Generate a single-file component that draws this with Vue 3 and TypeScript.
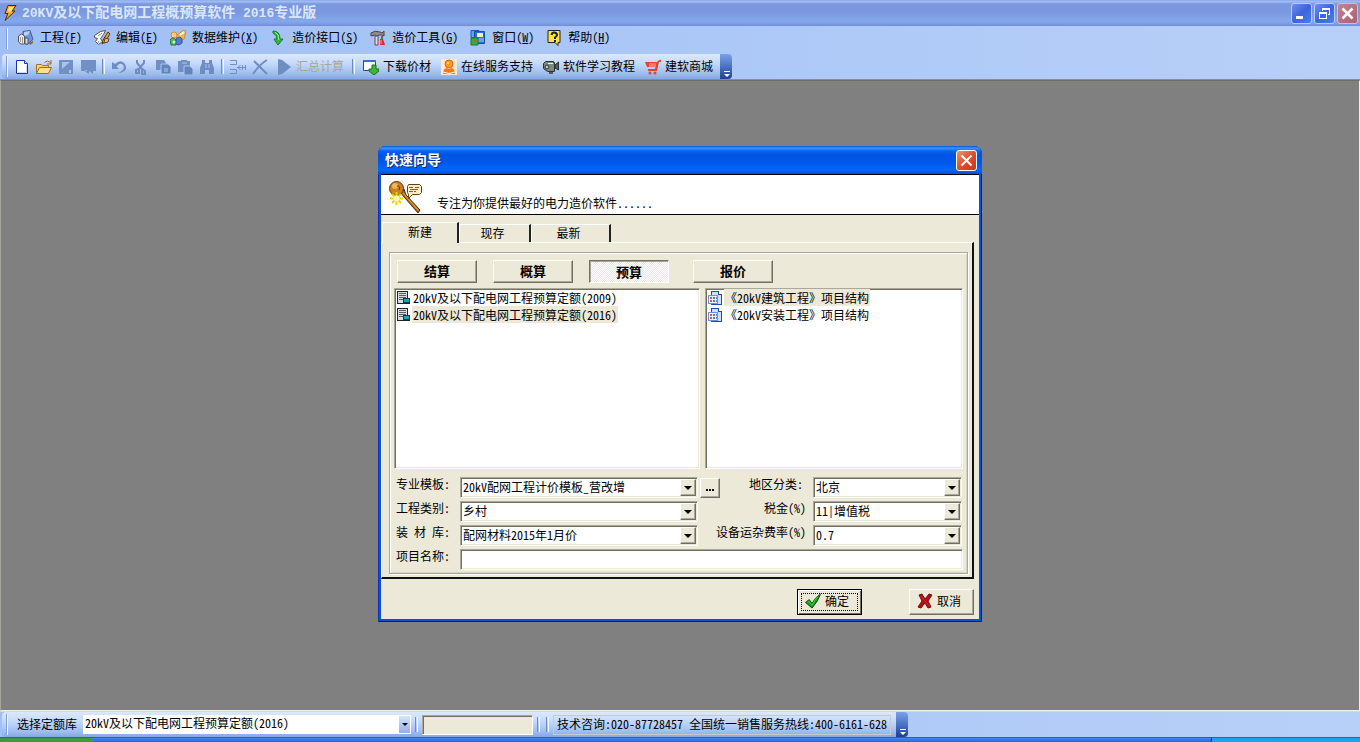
<script setup lang="ts">
import { ref } from 'vue'

interface MenuItem { icon: string; label: string; key: string }
interface Tool { icon: string; title: string; label?: string; off?: boolean; sep?: boolean }

const icons: Record<string, string> = {
  bolt: '<path d="M6 0.500 14 .5 10 6h3L3 15.500 6 8.500H3z" fill="#ffb01c" stroke="#4a2a08"/><path d="M7 2h5L9 6.500H6z" fill="#ffe58a"/>',
  project: '<path d="M5 1.500l7-1 3 9-6 5-4-3z" fill="#6f95d6" stroke="#44598c"/><path d="M6 2l6-1-2 4-4 1z" fill="#b9d2f8"/><path d="M.500 6l3-2 3 2v8H3l-2.500-2z" fill="#ecece8" stroke="#555"/><path d="M2.500 7v5M4.500 7v6" stroke="#999"/><path d="M7 8h3v6H7z" fill="#d8dde8" stroke="#556"/><path d="M11 13l4-2v2l-3 2z" fill="#876b33"/>',
  edit: '<path d="M.500 5.500l6-4 5-1-2 4-3 4 2 3-4 3-3-3 2-3-3-1z" fill="#f8f8f4" stroke="#555"/><path d="M4 6l4-3M5 11l-1 2" stroke="#888"/><path d="M14 2l-5 8-1 4 3-2 5-8z" fill="#e8a24a" stroke="#473010"/><path d="M11 8l4 1-1 3-4 1z" fill="#e8b878" stroke="#59452a"/>',
  data: '<path d="M7 5l7-5 2 1-2 8-5 3-3-3z" fill="#f6b84d" stroke="#cf8b29"/><path d="M10 5l4-3" stroke="#fff" stroke-width="2"/><circle cx="4" cy="5" r="3" fill="#f9cc78" stroke="#d28d35"/><path d="M0 10q3-4 6 0v5H1z" fill="#51b858" stroke="#287b42"/><path d="M6 9q4-4 6 0v4l-3 2-3-1z" fill="#4f79d8" stroke="#3157a4"/><circle cx="4" cy="12" r="1.500" fill="#d9fac9"/>',
  port: '<path d="M3 1q7 0 7 8h3l-5 6-4-6h3Q7 5 3 3z" fill="#34b53c" stroke="#197d25"/><path d="M5 2q4 2 4 8" fill="none" stroke="#a1ec91"/>',
  tools: '<path d="M1 3q4-3 9-1l2 1 2-2v5l-2-1H9L7 6 5 5 1 6z" fill="#8d8f90" stroke="#444"/><path d="M5 6h3v9H5z" fill="#ddd" stroke="#555"/><path d="M11 6h2v4h-2z" fill="#666"/><path d="M10 9h3l2 6h-5z" fill="#dc2933"/><path d="M11 10v4" stroke="#ff9a9a"/>',
  window: '<path d="M1 .500h8v7H1z" fill="#58a8ee" stroke="#1657b2"/><path d="M4.500 1.500h10v12h-10z" fill="#2871d4" stroke="#1650aa"/><path d="M7 3h6v4H7z" fill="#f8f0c1"/><path d="M8 9h6M8 11h6" stroke="#a8d0ff"/><path d="M1 8h7v7H1z" fill="#34ad45" stroke="#187b32"/><path d="M3 10h3v2H3z" fill="#dc5430"/>',
  help: '<path d="M2 .500h12v12h-2v3l-3-3H2z" fill="#ffe632" stroke="#222"/><path d="M5.500 5Q6 2.500 8 2.500q3 0 3 2.500 0 1-2 2.500v1.500M9 10v2" fill="none" stroke="#222" stroke-width="2"/>',
  new: '<path d="M2.500 1.500h8l3 3v10h-11z" fill="#fff" stroke="#1736a5"/><path d="M10.500 1.500v3h3" fill="#d6e6ff" stroke="#1736a5"/><path d="M12.500 6v7.500H4" fill="none" stroke="#c8dafa"/>',
  open: '<path d="M.500 14.500v-9h5l1 1h6v2" fill="#f5d276" stroke="#a3761b"/><path d="M.500 14.500l3-6h12l-3 6z" fill="#ffdf86" stroke="#a36b14"/><path d="M8.500 3.500q3-3 6 0M15 1v4h-4" fill="none" stroke="#a36b14"/>',
  save: '<path d="M1 1h14v14H1z" fill="#7390c5"/><path d="M4 3h8l-8 7z" fill="#a9c4ec"/><path d="M11 11h2v3h-2z" fill="#adc7ef"/>',
  book: '<path d="M1 1h15v11h-3v3l-4-3v3l-5-3H1z" fill="#7390c5"/><path d="M4 13l3-2" stroke="#adc6ef"/>',
  undo: '<path d="M1 3v7h7L5.500 7.500Q9 3 12 6q3 5-5 8Q18 13 14 5 10-.500 4 5z" fill="#6f8cc3"/>',
  cut: '<path d="M4 1v3l6 7M11 1v3L5 11" stroke="#6f8cc3" stroke-width="2" fill="none"/><path d="M6 10v4H3v-3zM9 10l3 2v3H9z" fill="none" stroke="#6f8cc3" stroke-width="2"/>',
  copy: '<path d="M1 1h8l2 3v7H1z" fill="#728fc5"/><path d="M6 5h7l3 3v7H6z" fill="#6583be" stroke="#adc6ef"/><path d="M9 10h4M9 12h4" stroke="#adc6ef"/>',
  paste: '<path d="M1 2h3V1h6v1h3v11H1z" fill="#728fc5"/><path d="M7 7h6l3 3v6H7z" fill="#6583be" stroke="#adc6ef"/><path d="M5 4h5" stroke="#a9c4ec"/>',
  find: '<path d="M3 1h3v3h4V1h3v3l2 5v6h-5v-4H6v4H1V9l2-5z" fill="#6f8cc3"/><path d="M7 5v4M10 5v4" stroke="#a9c4ec"/>',
  insert: '<path d="M0 1.500h6.500v4H0M0 10.500h6.500v4H0M7 8.500h9M10.500 6L8 8.500l2.500 2.500M12.500 6v5M15.500 6v5" fill="none" stroke="#728fc5"/>',
  delete: '<path d="M2 2l13 13M15 1Q8 5 1 15" stroke="#6f8cc3" stroke-width="2" fill="none"/>',
  play: '<path d="M2 0l4 1 9 7-9 7-4 1z" fill="#6f8cc3"/>',
  download: '<path d="M.500 1.500h12v10H.500z" fill="#fff" stroke="#234899"/><path d="M1 1h12v2H1z" fill="#426dc6"/><path d="M9 6h4v4h3v2l-5 4-5-4v-2h3z" fill="#40b53a" stroke="#16731a"/>',
  user: '<path d="M0 0h16v16H0z" fill="#ffe7d2"/><circle cx="8" cy="5" r="4" fill="#ff9820" stroke="#e66414"/><path d="M2 15q0-6 4-6 2 2 4 0 4 0 4 6z" fill="#f5781c"/><path d="M2 13q6 3 12 0" stroke="#fff" fill="none"/><circle cx="7" cy="4" r="1" fill="#ffe19b"/>',
  camera: '<path d="M.500 4.500l2-2h8v1h1v9h-7l-4-3z" fill="#7d8883" stroke="#27352f"/><path d="M12 6l3.500-3v8L12 9z" fill="#4d5f67" stroke="#26343b"/><circle cx="4" cy="8" r="2" fill="#b6c1b8" stroke="#333"/><path d="M6 13h4v2H6z" fill="#555"/><path d="M5 4.500h5" stroke="#edf2e9"/>',
  cart: '<path d="M0 3h12l2-2h2v2h-2l-2 9H3v-2h7l.500-2H2z" fill="#e34234"/><path d="M4 5h7M4 7h7" stroke="#f6b0a4"/><circle cx="5" cy="14" r="1.500" fill="#e34234"/><circle cx="10" cy="14" r="1.500" fill="#e34234"/>',
  quota: '<path d="M.500 .500h10v12H.500z" fill="#d9dddd" stroke="#222"/><path d="M2 2.500h7M2 4.500h7M2 6.500h7M2 8.500h4" stroke="#565d60"/><path d="M6.500 7.500h6v4h-6z" fill="#16a6b8" stroke="#07434f"/><path d="M2 12.500h11" stroke="#222"/>',
  structure: '<path d="M3.500 .500h7l3 3v10h-10z" fill="#cfe0ff" stroke="#1d4cae"/><path d="M.500 4.500h9v8h-9z" fill="#edf3ff" stroke="#6b92dc"/><path d="M2 6h2v2H2zM2 9h2v2H2z" fill="#e5533a"/><path d="M5 9h2v2H5z" fill="#3d9c55"/><path d="M5 6h2v2H5zM8 6h1v2H8zM8 9h1v2H8z" fill="#5a78dc"/><path d="M10.500 .500v3h3" fill="#fff" stroke="#1d4cae"/>',
  check: '<path d="M1 10l4-3 3 4Q11 5 17 1q-2 7-9 15z" fill="#139c18" stroke="#064c0b"/><path d="M3 10l2-1 3 4q3-6 6-9" fill="none" stroke="#4fd640"/><path d="M15 1h2v1h-2z" fill="#e03fc2"/>',
  cross: '<path d="M2 2l3-1 3 5 4-5 3 1-4 6 3 6-3 1-3-5-4 5-3-1 4-6z" fill="#b30f12" stroke="#7a0b0e"/><path d="M4 3l8 10" stroke="#d0302a"/>',
  wand: '<path d="M10 10l5-2 2 6 14 15-2 3z" fill="#b56c14" stroke="#4a2a05"/><path d="M14 12l15 17" stroke="#e8ab50"/><circle cx="7.500" cy="7.500" r="7" fill="#cf7f1e" stroke="#5c340a"/><circle cx="6" cy="5" r="3" fill="#f0b45e"/><path d="M8 5q4 0 2 4" fill="none" stroke="#5c340a"/><path d="M19.500 3.500h11l2 2v6l-2 2h-7l-4 4v-4l-1-2v-6z" fill="#fdeecb" stroke="#6b3d10"/><path d="M20 6.500h4M26 6.500h4M21 8.500h8M20 10.500h4M25 10.500h2" stroke="#8d5c25"/><path d="M7.500 11v13M1 17.500h13M3 13l9 9M12 13l-9 9" stroke="#e1d800" stroke-width="2"/><circle cx="7.500" cy="17.500" r="3" fill="#fffcae"/>',
}

const menus: MenuItem[] = [
  { icon: 'project', label: '工程', key: 'F' },
  { icon: 'edit', label: '编辑', key: 'E' },
  { icon: 'data', label: '数据维护', key: 'X' },
  { icon: 'port', label: '造价接口', key: 'S' },
  { icon: 'tools', label: '造价工具', key: 'G' },
  { icon: 'window', label: '窗口', key: 'W' },
  { icon: 'help', label: '帮助', key: 'H' },
]

const tools: Tool[] = [
  { icon: 'new', title: '新建' },
  { icon: 'open', title: '打开' },
  { icon: 'save', title: '保存', off: true },
  { icon: 'book', title: '关闭', off: true },
  { icon: 'undo', title: '撤销', off: true, sep: true },
  { icon: 'cut', title: '剪切', off: true },
  { icon: 'copy', title: '复制', off: true },
  { icon: 'paste', title: '粘贴', off: true },
  { icon: 'find', title: '查找', off: true },
  { icon: 'insert', title: '插入', off: true, sep: true },
  { icon: 'delete', title: '删除', off: true },
  { icon: 'play', title: '汇总计算', label: '汇总计算', off: true },
  { icon: 'download', title: '下载价材', label: '下载价材', sep: true },
  { icon: 'user', title: '在线服务支持', label: '在线服务支持' },
  { icon: 'camera', title: '软件学习教程', label: '软件学习教程' },
  { icon: 'cart', title: '建软商城', label: '建软商城' },
]

const tabs = ['新建', '现存', '最新']
const kinds = ['结算', '概算', '预算', '报价']
const quotas = ['20kV及以下配电网工程预算定额(2009)', '20kV及以下配电网工程预算定额(2016)']
const structures = ['《20kV建筑工程》项目结构', '《20kV安装工程》项目结构']

const tab = ref(0)
const kind = ref(2)
const quota = ref(1)
const structure = ref(0)
const projectName = ref('')
</script>

<template>
  <div class="app">
    <header class="caption">
      <svg class="ico" viewBox="0 0 16 16" v-html="icons.bolt" />
      <h1><span class="latin">20KV</span>及以下配电网工程概预算软件<span class="latin"> 2016</span>专业版</h1>
      <button class="sys" aria-label="最小化"><svg viewBox="0 0 19 19"><path d="M4 12h7v3H4z" fill="#fff" /></svg></button>
      <button class="sys" aria-label="还原"><svg viewBox="0 0 19 19"><path d="M7 4h8v7h-2v-1h1V6H8v1H7zM4 8h8v7H4zM5 10v4h6v-4z" fill="#fff" fill-rule="evenodd" /></svg></button>
      <button class="sys sys-x" aria-label="关闭"><svg viewBox="0 0 19 19"><path d="M4.500 4.500l10 10M14.500 4.500l-10 10" stroke="#fff" stroke-width="2.500" /></svg></button>
    </header>

    <nav class="menubar">
      <i class="grip" />
      <button v-for="m in menus" :key="m.key" class="menu">
        <svg class="ico" viewBox="0 0 16 16" v-html="icons[m.icon]" />
        <span>{{ m.label }}(<u>{{ m.key }}</u>)</span>
      </button>
    </nav>

    <div class="dock">
      <div class="band toolbar">
        <i class="grip" />
        <template v-for="t in tools" :key="t.icon">
          <i v-if="t.sep" class="sep" />
          <button class="tool" :class="{ labelled: t.label }" :disabled="t.off" :aria-label="t.title">
            <svg class="ico" viewBox="0 0 16 16" v-html="icons[t.icon]" />
            <span v-if="t.label">{{ t.label }}</span>
          </button>
        </template>
        <button class="more" aria-label="更多"><svg viewBox="0 0 7 7"><path d="M1 1h6v1H1z M1 4h6L4 7z" fill="#fff" /></svg></button>
      </div>
    </div>

    <main class="desk">
      <section class="dialog" role="dialog" aria-labelledby="dlg-title">
        <header class="dlg-bar">
          <h2 id="dlg-title">快速向导</h2>
          <button class="dlg-x" aria-label="关闭"><svg viewBox="0 0 19 19"><path d="M4.500 4.500l10 10M14.500 4.500l-10 10" stroke="#fff" stroke-width="2" /></svg></button>
        </header>
        <div class="dlg-body">
          <div class="banner">
            <svg class="wand" viewBox="0 0 34 33" v-html="icons.wand" />
            <p>专注为你提供最好的电力造价软件......</p>
          </div>

          <div class="tabs" role="tablist">
            <button v-for="(t, i) in tabs" :key="t" role="tab" :aria-selected="tab === i" class="tab" :class="{ on: tab === i }" @click="tab = i">{{ t }}</button>
          </div>
          <div class="page" role="tabpanel">
            <div class="group">
              <div class="kinds">
                <button v-for="(k, i) in kinds" :key="k" class="kind" :class="{ down: kind === i }" :aria-pressed="kind === i" @click="kind = i">{{ k }}</button>
              </div>
              <div class="lists">
                <ul class="list" role="listbox" aria-label="定额">
                  <li v-for="(q, i) in quotas" :key="q" role="option" :aria-selected="quota === i" @click="quota = i">
                    <svg class="mini" viewBox="0 0 14 14" v-html="icons.quota" /><span :class="{ hit: quota === i }">{{ q }}</span>
                  </li>
                </ul>
                <ul class="list wide" role="listbox" aria-label="项目结构">
                  <li v-for="(s, i) in structures" :key="s" role="option" :aria-selected="structure === i" @click="structure = i">
                    <svg class="mini" viewBox="0 0 14 14" v-html="icons.structure" /><span :class="{ hit: structure === i }">{{ s }}</span>
                  </li>
                </ul>
              </div>
              <form class="form" @submit.prevent>
                <label for="tpl">专业模板:</label>
                <div class="combo"><select id="tpl"><option>20kV配网工程计价模板_营改增</option></select><i class="drop" /></div>
                <button class="dots" type="button" aria-label="浏览"><svg viewBox="0 0 9 2"><path d="M0 0h2v2H0zM3 0h2v2H3zM6 0h2v2H6z" /></svg></button>
                <label for="area" class="colon">地区分类:</label>
                <div class="combo"><select id="area"><option>北京</option></select><i class="drop" /></div>

                <label for="cat">工程类别:</label>
                <div class="combo"><select id="cat"><option>乡村</option></select><i class="drop" /></div>
                <label for="tax" class="right">税金(%)</label>
                <div class="combo"><select id="tax"><option>11|增值税</option></select><i class="drop" /></div>

                <label for="mat">装 材 库:</label>
                <div class="combo"><select id="mat"><option>配网材料2015年1月价</option></select><i class="drop" /></div>
                <label for="rate" class="right">设备运杂费率(%)</label>
                <div class="combo"><select id="rate"><option>0.7</option></select><i class="drop" /></div>

                <label for="pname">项目名称:</label>
                <input id="pname" v-model="projectName" class="field" type="text" />
              </form>
            </div>
          </div>

          <footer class="actions">
            <button class="push primary"><svg viewBox="0 0 18 17" v-html="icons.check" />确定</button>
            <button class="push"><svg viewBox="0 0 16 16" v-html="icons.cross" />取消</button>
          </footer>
        </div>
      </section>
    </main>

    <footer class="dock status-dock">
      <div class="band status">
        <i class="grip" />
        <label for="lib">选择定额库</label>
        <div class="flat"><select id="lib"><option>20kV及以下配电网工程预算定额(2016)</option></select><i class="drop" /></div>
        <i class="sep" />
        <div class="well" />
        <i class="sep" /><i class="sep" />
        <p class="hotline">技术咨询:020-87728457 全国统一销售服务热线:400-6161-628</p>
        <button class="more" aria-label="更多"><svg viewBox="0 0 7 7"><path d="M1 1h6v1H1z M1 4h6L4 7z" fill="#fff" /></svg></button>
      </div>
    </footer>
    <div class="taskbar"><i class="start" /><i class="tray" /></div>
  </div>
</template>

<style>
body { margin: 0; }
</style>

<style scoped>
.app, .app * { box-sizing: border-box; }
.app {
  display: flex;
  flex-direction: column;
  min-height: 100vh;
  background: #808080;
  color: #000;
  font: 12px/14px "Noto Sans CJK SC", "Liberation Sans", sans-serif;
  font-feature-settings: "hwid";
  text-spacing-trim: space-all;
  white-space: nowrap;
}
button, select, input { font: inherit; font-feature-settings: inherit; color: inherit; margin: 0; padding: 0; border: 0; border-radius: 0; background: none; }
h1, h2, p, ul { margin: 0; padding: 0; }
svg { display: block; flex: none; }
.ico { width: 16px; height: 16px; }
.mini { shape-rendering: crispEdges; }

.caption {
  display: flex;
  align-items: center;
  gap: 2px;
  height: 26px;
  padding: 0 2px;
  background: linear-gradient(#7f9fe6 0, #a3c0f2 1px, #9bb8ee 2px, #7b97e0 4px, #7a97e0 12px, #84a8ea 21px, #7d9be4 24px, #7189d4 26px);
}
.caption h1 { flex: 1; padding: 0 0 2px 2px; font-size: 14px; line-height: 20px; color: #dbe6fa; }
.latin { font: bold 13px/20px "Liberation Mono", monospace; white-space: pre; }
.sys { width: 21px; height: 21px; border: 1px solid #b8cbf5; border-radius: 3px; background: linear-gradient(135deg, #6f90ea, #3f63dc 50%, #4a7df0); }
.sys svg { width: 19px; height: 19px; }
.sys-x { border-color: #d0bcd8; background: linear-gradient(135deg, #bd8496, #b0606f); }

.menubar { display: flex; align-items: center; gap: 12px; height: 28px; padding: 0 6px 4px; background: linear-gradient(90deg, #a0bff5, #b7d0f8); }
.menubar .grip { margin-right: -2px; }
.menu { display: flex; align-items: center; gap: 6px; height: 22px; }
.menu span { padding-bottom: 2px; }
.grip { flex: none; width: 2px; height: 21px; border-left: 1px solid #7f9fdc; border-right: 1px solid #f4f8ff; }

.dock { padding-left: 2px; background: linear-gradient(90deg, #a0bff5, #b7d0f8); border-bottom: 1px solid #8c8f88; }
.band { position: relative; display: flex; align-items: center; width: max-content; height: 25px; padding: 0 17px 0 4px; border-radius: 4px; background: linear-gradient(#dce9fd, #c2d8fa 40%, #9dbcee 80%, #84a8e3); }
.toolbar { gap: 6px; }
.sep { flex: none; width: 3px; height: 15px; border-left: 1px solid #6a8ccb; border-right: 1px solid #f1f7ff; }
.tool { display: flex; align-items: center; gap: 4px; height: 22px; }
.tool span { padding-bottom: 2px; }
.labelled { padding: 0 2px; }
.tool:disabled { color: #a6a69c; }
.more { position: absolute; top: 0; right: 0; display: flex; align-items: flex-end; justify-content: center; width: 12px; height: 100%; padding-bottom: 2px; border-radius: 0 4px 4px 0; background: linear-gradient(#7aa2ea, #4a72c4 50%, #1f3f96); }
.more svg { width: 7px; height: 7px; }

.desk { flex: 1; display: grid; place-items: start center; padding: 65px 0 24px; border: 1px solid; border-color: #6e6c66 #f2efe4 #f2efe4 #a8a59a; background: #808080; }
.dialog { width: min(604px, 100%); padding: 0 3px 3px; border-radius: 8px 8px 0 0; background: #0a4fe0; box-shadow: inset 1px 0 #0831b8, inset -1px -1px #001594; }
.dlg-bar { display: flex; align-items: center; height: 28px; margin: 0 -3px; padding: 0 5px 0 7px; border-radius: 8px 8px 0 0; background: linear-gradient(#0650cf 0, #3d95ff 2px, #0b62f0 5px, #0054e3 9px, #0057e8 16px, #0367fb 24px, #0450d8 28px); }
.dlg-bar h2 { flex: 1; padding-bottom: 2px; font-size: 14px; line-height: 20px; color: #fff; text-shadow: 1px 1px #0b2a80; }
.dlg-x { width: 21px; height: 21px; border: 1px solid #fff; border-radius: 3px; background: linear-gradient(135deg, #ee9878, #dd4e2a 50%, #c63a12); }
.dlg-x svg { width: 19px; height: 19px; }
.dlg-body { background: #ece9d8; }
.banner { display: flex; align-items: flex-end; gap: 14px; height: 41px; padding: 0 8px; border: solid #000; border-width: 1px 0; background: #fff; }
.wand { width: 34px; height: 33px; }
.banner p { padding-bottom: 4px; }

.tabs { display: grid; grid-template-columns: 77px 72px 80px; align-items: end; height: 27px; padding: 0 1px; }
.tab { height: 18px; padding: 0 4px 2px 0; border-top: 1px solid #fff; border-right: 2px solid #222; border-left: 1px solid #fff; }
.tab.on { position: relative; height: 21px; margin-bottom: -1px; padding-right: 0; background: #ece9d8; }
.page { margin-right: 5px; padding: 9px 4px 3px 7px; border: solid; border-width: 1px 2px 2px 1px; border-color: #fff #111 #111 #fff; }
.group { padding: 6px 4px 3px; border: 1px solid #aca899; box-shadow: inset 1px 1px #fff, inset -1px -1px #d8d4c2, 1px 1px #fff; }
.kinds { display: grid; grid-template-columns: repeat(4, 80px); gap: 16px; padding: 1px 3px 5px; }
.kind { height: 23px; padding-bottom: 2px; font-size: 13px; font-weight: bold; border: 1px solid; border-color: #fff #716f64 #716f64 #fff; box-shadow: inset -1px -1px #aca899; background: #ece9d8; }
.kind:last-child { margin: 0 -8px 0 8px; }
.kind.down { padding-bottom: 0; border-color: #716f64 #fff #fff #716f64; box-shadow: inset 1px 1px #aca899; background: repeating-conic-gradient(#fff 0 25%, #ece9d8 0 50%) 0 0 / 2px 2px; }
.lists { display: grid; grid-template-columns: 306px 1fr; gap: 5px; }
.list { min-height: 181px; padding: 0 2px; list-style: none; border: 1px solid; border-color: #aca899 #fff #fff #aca899; box-shadow: inset 1px 1px #716f64, inset -1px -1px #ece9d8; background: #fff; }
.list li { display: flex; align-items: center; gap: 1px; height: 17px; }
.list.wide li { gap: 2px; }
.mini { width: 14px; height: 14px; }
.list span { padding: 0 1px; line-height: 17px; }
.list .hit { background: #ece9d8; }

.form { display: grid; grid-template-columns: 64px 239px 22px 1fr 150px; grid-auto-rows: 21px; row-gap: 3px; padding: 8px 0 0 2px; }
.form .right { grid-column: 3 / 5; justify-self: end; padding-right: 7px; }
.form .colon { justify-self: end; padding-right: 10px; }
.combo, .flat { position: relative; }
.combo { margin-right: 1px; }
.combo select, .field { display: block; width: 100%; height: 21px; padding: 0 18px 2px 2px; appearance: none; border: 1px solid; border-color: #aca899 #fff #fff #aca899; box-shadow: inset 1px 1px #716f64, inset -1px -1px #ece9d8; background: #fff; }
.field { grid-column: 2 / -1; padding-right: 4px; }
.drop { position: absolute; top: 2px; right: 2px; display: grid; place-items: center; width: 16px; height: 17px; border: 1px solid; border-color: #fff #716f64 #716f64 #fff; box-shadow: inset -1px -1px #aca899; background: #ece9d8; pointer-events: none; }
.drop::after { content: ""; border: 4px solid transparent; border-top-color: #000; border-bottom: 0; }
.dots { display: flex; align-items: flex-end; justify-content: center; width: 20px; height: 20px; margin: 1px; padding-bottom: 6px; border: 1px solid; border-color: #fff #716f64 #716f64 #fff; box-shadow: inset -1px -1px #aca899; }
.dots svg { width: 9px; height: 2px; }

.actions { display: flex; justify-content: flex-end; gap: 47px; padding: 10px 5px 4px; }
.push { display: flex; align-items: center; justify-content: center; gap: 3px; width: 65px; height: 26px; padding: 0 6px 2px 0; border: 1px solid; border-color: #fff #716f64 #716f64 #fff; box-shadow: inset -1px -1px #aca899; }
.push svg { width: 18px; height: 16px; }
.primary { border-color: #000; box-shadow: inset 1px 1px #fff, inset -1px -1px #716f64; outline: 1px dotted #000; outline-offset: -5px; }

.status-dock { border-top: 1px solid #c9d9f5; border-bottom: 1px solid #2a5cc4; }
.status { gap: 4px; }
.status label { padding: 0 2px 2px 5px; }
.flat select { display: block; width: 328px; height: 19px; padding: 0 14px 4px 2px; appearance: none; border: 0; background: #fff; }
.flat .drop { top: 1px; right: 1px; width: 11px; border: 0; box-shadow: none; background: linear-gradient(#d5e4fc, #8fb1ea); }
.flat .drop::after { border-width: 3px; border-bottom: 0; }
.well { width: 111px; height: 20px; border: 1px solid; border-color: #aca899 #fff #fff #aca899; box-shadow: inset 1px 1px #716f64; background: #ece9d8; }
.status .sep + .sep { margin-left: 2px; }
.hotline { padding: 1px 3px 3px; border: 1px solid #c4cbd6; }
.taskbar { display: flex; justify-content: space-between; height: 4px; background: linear-gradient(#3f8cf0, #2663d8); }
.start { width: 94px; border-radius: 0 4px 0 0; background: #3f9a3f; }
.tray { width: 149px; border-left: 1px solid #0b2f7a; background: #17a5ee; }
</style>
